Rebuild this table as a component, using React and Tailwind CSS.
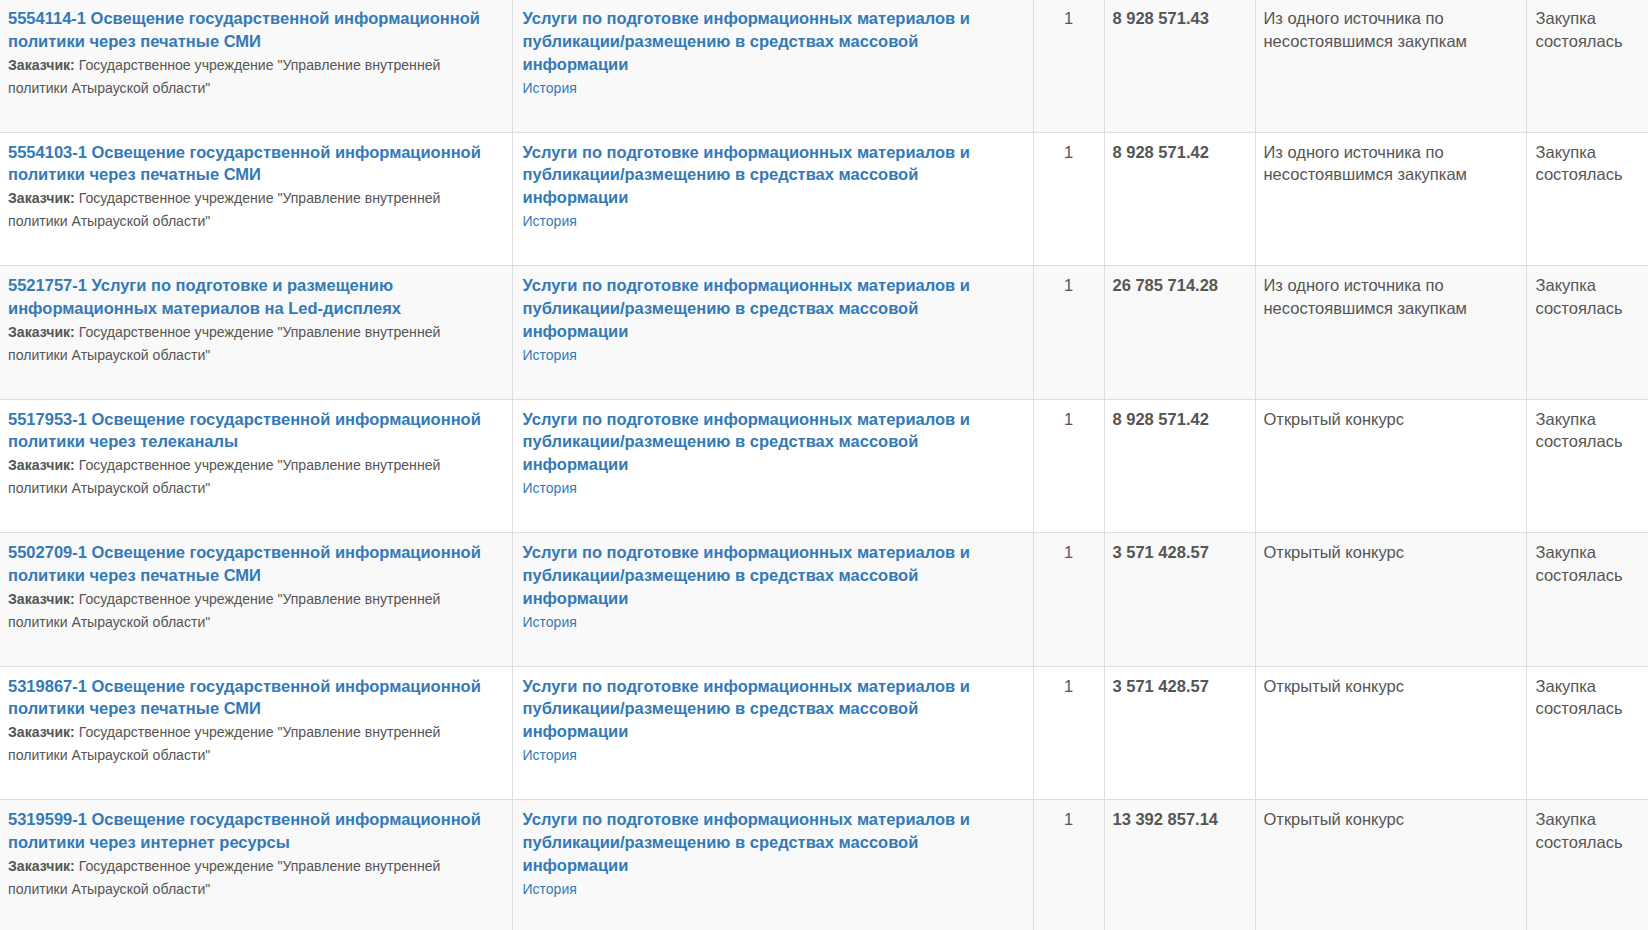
const rows = [
    { id: "5554114-1", title: "Освещение государственной информационной политики через печатные СМИ", sum: "8 928 571.43", method: "Из одного источника по несостоявшимся закупкам" },
    { id: "5554103-1", title: "Освещение государственной информационной политики через печатные СМИ", sum: "8 928 571.42", method: "Из одного источника по несостоявшимся закупкам" },
    { id: "5521757-1", title: "Услуги по подготовке и размещению информационных материалов на Led-дисплеях", sum: "26 785 714.28", method: "Из одного источника по несостоявшимся закупкам" },
    { id: "5517953-1", title: "Освещение государственной информационной политики через телеканалы", sum: "8 928 571.42", method: "Открытый конкурс" },
    { id: "5502709-1", title: "Освещение государственной информационной политики через печатные СМИ", sum: "3 571 428.57", method: "Открытый конкурс" },
    { id: "5319867-1", title: "Освещение государственной информационной политики через печатные СМИ", sum: "3 571 428.57", method: "Открытый конкурс" },
    { id: "5319599-1", title: "Освещение государственной информационной политики через интернет ресурсы", sum: "13 392 857.14", method: "Открытый конкурс" },
];

const customer = "Государственное учреждение \"Управление внутренней политики Атырауской области\"";
const lotName = "Услуги по подготовке информационных материалов и публикации/размещению в средствах массовой информации";

export default function App() {
    const cell = "border border-[#ddd] px-2 pt-2 align-top";

    return (
        <div className="w-[1648px] h-[930px] overflow-hidden bg-white font-['Liberation_Sans',Arial,sans-serif] text-[16.5px] leading-[22.86px] text-[#555]">
            <table className="table-fixed border-collapse w-[1648px] -mt-[2px]">
                <colgroup>
                    <col className="w-[512px]" />
                    <col className="w-[521px]" />
                    <col className="w-[71px]" />
                    <col className="w-[151px]" />
                    <col className="w-[271px]" />
                    <col />
                </colgroup>
                <tbody>
                    {rows.map((row, i) => (
                        <tr key={row.id} className={`h-[133.5px] ${i % 2 === 0 ? "bg-[#f9f9f9]" : "bg-white"}`}>
                            <td className={`${cell} border-l-0`}>
                                <a href="#" className="font-bold text-[#337ab7]">
                                    {row.id} {row.title}
                                </a>
                                <div className="max-w-[460px] pt-[1px] text-[14.1px]">
                                    <b>Заказчик:</b> {customer}
                                </div>
                            </td>
                            <td className={`${cell} pl-[10px]`}>
                                <a href="#" className="block max-w-[470px] font-bold text-[#337ab7]">
                                    {lotName}
                                </a>
                                <a href="#" className="text-[14px] text-[#337ab7]">История</a>
                            </td>
                            <td className={`${cell} text-center`}>1</td>
                            <td className={`${cell} font-bold`}>{row.sum}</td>
                            <td className={cell}>{row.method}</td>
                            <td className={`${cell} pl-[9px] border-r-0`}>Закупка состоялась</td>
                        </tr>
                    ))}
                </tbody>
            </table>
        </div>
    );
}
